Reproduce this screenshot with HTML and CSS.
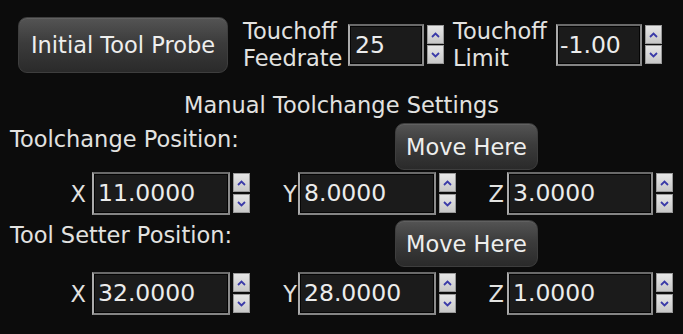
FILE: index.html
```html
<!DOCTYPE html>
<html>
<head>
<meta charset="utf-8">
<link rel="stylesheet" href="styles.css">
</head>
<body>
<div class="panel">
  <div class="row top">
    <button class="btn btn-probe">Initial Tool Probe</button>
    <div class="lbl2 lbl-feed">Touchoff<br>Feedrate</div>
    <div class="spin spin-small">
      <div class="entry entry-feed">25</div>
      <div class="arrows">
        <span class="arr"><svg width="9" height="6" viewBox="0 0 9 6"><path d="M1 5 L4.5 1.5 L8 5" /></svg></span>
        <span class="arr"><svg width="9" height="6" viewBox="0 0 9 6"><path d="M1 1 L4.5 4.5 L8 1" /></svg></span>
      </div>
    </div>
    <div class="lbl2 lbl-limit">Touchoff<br>Limit</div>
    <div class="spin spin-small">
      <div class="entry entry-limit">-1.00</div>
      <div class="arrows">
        <span class="arr"><svg width="9" height="6" viewBox="0 0 9 6"><path d="M1 5 L4.5 1.5 L8 5" /></svg></span>
        <span class="arr"><svg width="9" height="6" viewBox="0 0 9 6"><path d="M1 1 L4.5 4.5 L8 1" /></svg></span>
      </div>
    </div>
  </div>

  <div class="heading">Manual Toolchange Settings</div>

  <div class="row section section-1">
    <div class="sec-label">Toolchange Position:</div>
    <button class="btn btn-move">Move Here</button>
  </div>

  <div class="row axes">
    <div class="axis-lbl lbl-x">X</div>
    <div class="spin">
      <div class="entry entry-x">11.0000</div>
      <div class="arrows">
        <span class="arr"><svg width="9" height="6" viewBox="0 0 9 6"><path d="M1 5 L4.5 1.5 L8 5" /></svg></span>
        <span class="arr"><svg width="9" height="6" viewBox="0 0 9 6"><path d="M1 1 L4.5 4.5 L8 1" /></svg></span>
      </div>
    </div>
    <div class="axis-lbl lbl-y">Y</div>
    <div class="spin">
      <div class="entry entry-y">8.0000</div>
      <div class="arrows">
        <span class="arr"><svg width="9" height="6" viewBox="0 0 9 6"><path d="M1 5 L4.5 1.5 L8 5" /></svg></span>
        <span class="arr"><svg width="9" height="6" viewBox="0 0 9 6"><path d="M1 1 L4.5 4.5 L8 1" /></svg></span>
      </div>
    </div>
    <div class="axis-lbl lbl-z">Z</div>
    <div class="spin">
      <div class="entry entry-z">3.0000</div>
      <div class="arrows">
        <span class="arr"><svg width="9" height="6" viewBox="0 0 9 6"><path d="M1 5 L4.5 1.5 L8 5" /></svg></span>
        <span class="arr"><svg width="9" height="6" viewBox="0 0 9 6"><path d="M1 1 L4.5 4.5 L8 1" /></svg></span>
      </div>
    </div>
  </div>

  <div class="row section section-2">
    <div class="sec-label">Tool Setter Position:</div>
    <button class="btn btn-move">Move Here</button>
  </div>

  <div class="row axes axes-2">
    <div class="axis-lbl lbl-x">X</div>
    <div class="spin">
      <div class="entry entry-x">32.0000</div>
      <div class="arrows">
        <span class="arr"><svg width="9" height="6" viewBox="0 0 9 6"><path d="M1 5 L4.5 1.5 L8 5" /></svg></span>
        <span class="arr"><svg width="9" height="6" viewBox="0 0 9 6"><path d="M1 1 L4.5 4.5 L8 1" /></svg></span>
      </div>
    </div>
    <div class="axis-lbl lbl-y">Y</div>
    <div class="spin">
      <div class="entry entry-y">28.0000</div>
      <div class="arrows">
        <span class="arr"><svg width="9" height="6" viewBox="0 0 9 6"><path d="M1 5 L4.5 1.5 L8 5" /></svg></span>
        <span class="arr"><svg width="9" height="6" viewBox="0 0 9 6"><path d="M1 1 L4.5 4.5 L8 1" /></svg></span>
      </div>
    </div>
    <div class="axis-lbl lbl-z">Z</div>
    <div class="spin">
      <div class="entry entry-z">1.0000</div>
      <div class="arrows">
        <span class="arr"><svg width="9" height="6" viewBox="0 0 9 6"><path d="M1 5 L4.5 1.5 L8 5" /></svg></span>
        <span class="arr"><svg width="9" height="6" viewBox="0 0 9 6"><path d="M1 1 L4.5 4.5 L8 1" /></svg></span>
      </div>
    </div>
  </div>
</div>
</body>
</html>
```

FILE: styles.css
```css
html, body {
  margin: 0;
  padding: 0;
  background: #0c0c0c;
}
body {
  width: 683px;
  height: 334px;
  overflow: hidden;
  font-family: "DejaVu Sans", "Liberation Sans", sans-serif;
  font-size: 22.5px;
  color: #e2e2e0;
}
.panel {
  padding-top: 17px;
}
.row {
  display: flex;
}
.top {
  height: 56px;
  align-items: center;
}
.btn {
  font-family: "DejaVu Sans", "Liberation Sans", sans-serif;
  font-size: 22.5px;
  color: #eeeeed;
  border: 1px solid #3e3e3e;
  border-radius: 9px;
  background: linear-gradient(to bottom, #545454 0%, #3c3c3c 45%, #2a2a2a 100%);
  box-shadow: inset 0 1px 0 rgba(255,255,255,0.08);
  padding: 0;
  margin: 0;
  cursor: default;
}
.btn-probe {
  margin-left: 18px;
  width: 210px;
  height: 56px;
}
.btn-move {
  width: 143px;
  height: 47px;
}
.lbl2 {
  line-height: 27px;
  margin-right: 4px;
}
.lbl-feed {
  margin-left: 15px;
  width: 101px;
}
.lbl-limit {
  margin-left: 9px;
  width: 99px;
}
.spin {
  display: flex;
  align-items: flex-start;
  gap: 3px;
}
.entry {
  box-sizing: border-box;
  height: 43px;
  background: #1b1b1b;
  border: 2px solid #6a6a6a;
  border-left-color: #ababab;
  border-right-color: #8c8c8c;
  border-bottom-color: #858585;
  box-shadow: inset 0 0 0 1px #050505;
  font-size: 23.5px;
  line-height: 39px;
  padding-left: 4px;
  color: #ececec;
  white-space: nowrap;
  overflow: hidden;
}
.spin-small .entry {
  height: 42px;
  line-height: 38px;
}
.entry-feed {
  width: 76px;
  padding-left: 5px;
}
.entry-limit {
  width: 86px;
  padding-left: 2px;
}
.entry-x {
  width: 138px;
}
.entry-y {
  width: 138px;
}
.entry-z {
  width: 146px;
}
.arrows {
  width: 17px;
  height: 40px;
  margin-top: 1px;
  display: flex;
  flex-direction: column;
  justify-content: space-between;
}
.spin-small .arrows {
  height: 39px;
}
.arr {
  box-sizing: border-box;
  height: 19px;
  background: linear-gradient(to bottom, #e6e6e6, #c8c8c8);
  border: 1px solid #9a9a9a;
  display: flex;
  align-items: center;
  justify-content: center;
}
.arr svg path {
  fill: none;
  stroke: #3a3aa8;
  stroke-width: 1.8;
}
.heading {
  margin-top: 19px;
  line-height: 27px;
  text-align: center;
}
.section {
  align-items: flex-start;
  padding-left: 10px;
}
.section-1 {
  margin-top: 4px;
}
.section-2 {
  margin-top: 5px;
}
.sec-label {
  width: 385px;
  line-height: 27px;
  margin-top: 3px;
}
.section-2 .sec-label {
  margin-top: 2px;
}
.axes {
  margin-top: 2px;
  height: 43px;
  align-items: center;
}
.axes-2 {
  margin-top: 5px;
}
.axis-lbl {
  text-align: right;
}
.lbl-x {
  width: 86px;
  margin-right: 6px;
}
.lbl-y {
  width: 47px;
  margin-right: 1px;
}
.lbl-z {
  width: 48px;
  margin-right: 3px;
}
```
